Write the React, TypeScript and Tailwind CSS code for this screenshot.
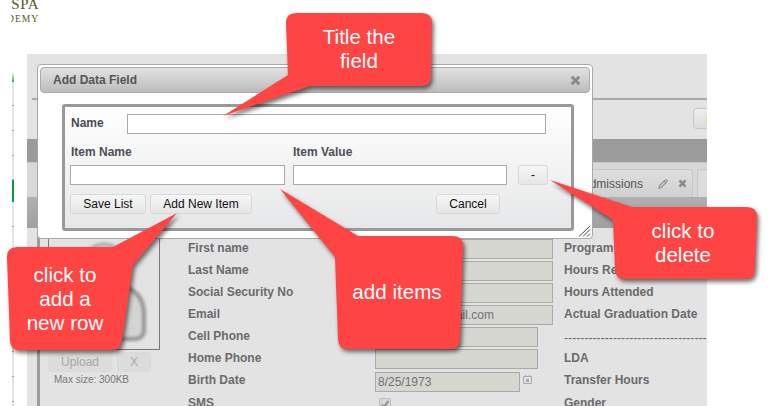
import { Pencil } from 'lucide-react';

const dashes = '-----------------------------------';

const rows = [
    { label: 'First name', value: '', width: 'w-[178px]', right: 'Program' },
    { label: 'Last Name', value: '', width: 'w-[178px]', right: 'Hours Required' },
    { label: 'Social Security No', value: '', width: 'w-[178px]', right: 'Hours Attended' },
    { label: 'Email', value: 'jane.doe@gmail.com', width: 'w-[178px]', right: 'Actual Graduation Date' },
    { label: 'Cell Phone', value: '', width: 'w-[163px]', right: dashes },
    { label: 'Home Phone', value: '', width: 'w-[163px]', right: 'LDA' },
];

// gaps between the little ticks on the cut-off strip at the far left
const stripCells = [24, 25, 25, 24];
const stripCellsLower = [25, 25, 25, 25, 25, 25, 25, 25];

const CloseIcon = ({ className }: { className: string }) => (
    <svg viewBox="0 0 10 10" className={className}>
        <path d="M1.6 1.6 L8.4 8.4 M8.4 1.6 L1.6 8.4" stroke="currentColor" strokeWidth="2.8" fill="none" />
    </svg>
);

const Button = ({ label, className }: { label: string; className: string }) => (
    <button className={`h-5 rounded-[3px] border border-[#d8d8d8] bg-gradient-to-b from-[#f6f6f6] to-[#e6e6e6] text-[12px] leading-none text-[#111] ${className}`}>
        {label}
    </button>
);

const TextBox = ({ className }: { className: string }) => (
    <div className={`h-5 border border-[#a9a9a9] bg-white ${className}`} />
);

const Dialog = () => (
    <div className="absolute left-[37px] top-[64px] flex h-[175px] w-[556px] flex-col rounded-[4px] border border-[#a8a8a8] bg-white p-[2px]">
        <div className="flex h-[26px] shrink-0 items-center justify-between rounded-[4px] border border-[#aaaaaa] bg-gradient-to-b from-[#e2e2e2] to-[#bcbcbc] pl-[12px] pr-[8px]">
            <span className="text-[12px] font-bold text-[#555]">Add Data Field</span>
            <CloseIcon className="h-[11px] w-[11px] text-[#8a8a8a]" />
        </div>
        <div className="ml-[22px] mt-[11px] flex h-[127px] w-[512px] flex-col rounded-[3px] border-[3px] border-[#999999] bg-gradient-to-b from-white to-[#e6e7e8] pl-[5px] pt-[7px]">
            <div className="flex h-5 items-center">
                <span className="w-[57px] pb-[2px] pl-[1px] text-[12px] font-bold text-[#4a4a55]">Name</span>
                <TextBox className="w-[419px]" />
            </div>
            <div className="mt-[7px] flex h-[22px] items-center text-[12px] font-bold text-[#4f4f58]">
                <span className="w-[223px] pl-[1px]">Item Name</span>
                <span>Item Value</span>
            </div>
            <div className="mt-[2px] flex items-center">
                <TextBox className="w-[215px]" />
                <TextBox className="ml-[8px] w-[214px]" />
                <Button label="-" className="ml-[11px] w-[30px]" />
            </div>
            <div className="mt-[9px] flex">
                <Button label="Save List" className="w-[76px]" />
                <Button label="Add New Item" className="ml-[4px] w-[102px]" />
                <Button label="Cancel" className="ml-[184px] w-[64px]" />
            </div>
        </div>
        <svg viewBox="0 0 13 12" className="absolute bottom-[1px] right-[1px] h-3 w-[13px] text-[#444]">
            <path d="M1 11.5 L12 1 M5 11.5 L12 4.5 M9 11.5 L12 8.5" stroke="currentColor" strokeWidth="1" fill="none" />
        </svg>
    </div>
);

const Callouts = () => (
    <>
        <svg viewBox="0 0 769 406" className="absolute inset-0 h-[406px] w-[769px] drop-shadow-[2px_3px_2px_rgba(0,0,0,0.55)]">
            <g fill="#ff4444">
                <path d="M296 13 H422 Q432 13 432 23 L431 76 Q431 86 421 86 H310 L223 116 L288 75 L286 23 Q286 13 296 13 Z" />
                <path d="M358 236 H453 Q463 236 463 246 L460 339 Q460 349 450 349 H348 Q338 349 338 339 L335 257 L280 189 Z" />
                <path d="M632 207 H747 Q757 207 757 217 L755 269 Q755 279 745 279 H625 Q615 279 615 269 L613 220 L550 180 Z" />
                <path d="M17 247 H113 L177 213 L133 265 L122 340 Q121 350 112 350 H20 Q10 350 10 340 L7 257 Q7 247 17 247 Z" />
            </g>
        </svg>
        <div className="absolute left-[286px] top-[25px] w-[146px] text-center text-[20.6px] leading-6 text-white">Title the<br />field</div>
        <div className="absolute left-[10px] top-[263px] w-[110px] text-center text-[20.6px] leading-6 text-white">click to<br />add a<br />new row</div>
        <div className="absolute left-[336px] top-[280px] w-[122px] text-center text-[20.6px] leading-6 text-white">add items</div>
        <div className="absolute left-[613px] top-[219px] w-[140px] text-center text-[20.6px] leading-6 text-white">click to<br />delete</div>
    </>
);

const Photo = () => (
    <div className="w-[112px] shrink-0">
        <div className="h-[112px] overflow-hidden border border-[#77777f]">
            <svg viewBox="0 0 110 110" className="h-full w-full text-[#949494] blur-[1.5px]">
                <circle cx="55" cy="26" r="21" fill="#d0d0d0" stroke="currentColor" strokeWidth="2" />
                <path d="M15 90 V75 Q15 45 55 45 Q95 45 95 75 V90 Q95 100 85 100 H25 Q15 100 15 90 Z" fill="#d4d4d4" stroke="currentColor" strokeWidth="4" />
            </svg>
        </div>
        <div className="mt-[2px] flex gap-[5px]">
            <button className="h-5 w-16 rounded-[3px] border border-[#dadada] bg-[#dcdcdc] text-[12px] text-[#a8a8a8]">Upload</button>
            <button className="h-5 w-[34px] rounded-[3px] border border-[#dadada] bg-[#dcdcdc] text-[12px] text-[#a8a8a8]">X</button>
        </div>
        <div className="ml-[6px] text-[10px] leading-4 text-[#777]">Max size: 300KB</div>
    </div>
);

const Form = () => (
    <div className="ml-[28px] min-w-0 flex-1 text-[12px] font-bold text-[#6a6a6c]">
        {rows.map(row => (
            <div key={row.label} className="flex h-[22px] items-center">
                <span className="w-[187px] shrink-0 pb-[2px]">{row.label}</span>
                <div className="w-[178px] shrink-0">
                    <div className={`h-5 overflow-hidden whitespace-nowrap border border-[#a9a9a9] bg-[#d6d7d1] pl-[5px] text-[12px] font-normal leading-[18px] text-[#6f7278] ${row.width}`}>
                        {row.value}
                    </div>
                </div>
                {row.right === dashes ? (
                    <span className="ml-[11px] min-w-0 flex-1 whitespace-nowrap pt-[1px] font-normal tracking-[0.08px]">{row.right}</span>
                ) : (
                    <span className="ml-[11px] min-w-0 flex-1 whitespace-nowrap pb-[2px]">{row.right}</span>
                )}
            </div>
        ))}
        <div className="flex h-[23px] items-center">
            <span className="w-[187px] shrink-0 pb-[4px]">Birth Date</span>
            <div className="flex w-[178px] shrink-0 items-center">
                <div className="mt-[1px] h-5 w-[145px] border border-[#a9a9a9] bg-[#d6d7d1] pl-[2px] text-[12px] font-normal leading-[18px] text-[#6f7278]">8/25/1973</div>
                <svg viewBox="0 0 9 9" className="ml-[3px] h-[9px] w-[9px] -translate-y-[2px] text-[#a8a8a8]">
                    <path d="M.5 1.5h8v7h-8z M2.5 0v2 M6.5 0v2" stroke="currentColor" fill="none" />
                    <path d="M3 4h3v3H3z" fill="currentColor" />
                </svg>
            </div>
            <span className="ml-[11px] pb-[4px]">Transfer Hours</span>
        </div>
        <div className="flex h-[22px] items-center">
            <span className="w-[187px] shrink-0 pb-[2px]">SMS</span>
            <div className="w-[178px] shrink-0 pl-[4px]">
                <div className="flex h-3 w-3 items-center justify-center rounded-[2px] border border-[#bdbdbd] bg-[#d8d8d8]">
                    <svg viewBox="0 0 10 10" className="h-[10px] w-[10px] text-[#8d8d8d]">
                        <path d="M1.5 5.5 L4 8 L8.5 2" stroke="currentColor" strokeWidth="2" fill="none" />
                    </svg>
                </div>
            </div>
            <span className="ml-[11px] pb-[2px]">Gender</span>
        </div>
    </div>
);

const LeftStrip = () => (
    <div className="ml-[12px] flex h-full w-[15px] flex-col">
        <div className="mt-[18px] h-[10px] w-[2px] shrink-0 bg-gradient-to-b from-white to-[#2aa84a]" />
        {stripCells.map((h, i) => (
            <div key={i} className="w-[2px] shrink-0 border-b border-[#a0a0a0] bg-[#e6e6e6]" style={{ height: h }} />
        ))}
        <div className="h-[22px] w-[2px] shrink-0 bg-[#0a9a3c]" />
        {stripCellsLower.map((h, i) => (
            <div key={i} className="w-[2px] shrink-0 border-b border-[#a0a0a0] bg-[#e6e6e6]" style={{ height: h }} />
        ))}
        <div className="w-[2px] flex-1 bg-[#e6e6e6]" />
    </div>
);

export default function App() {
    return (
        <div className="relative h-[406px] w-[769px] overflow-hidden bg-white font-['Liberation_Sans',Arial,sans-serif]">
            <div className="ml-[11px] h-[54px] w-[28px] overflow-hidden font-['Liberation_Serif',serif] text-[#4f5b20]">
                <div className="-mt-[3px] flex justify-end text-[15px] leading-[15px] tracking-[0.5px]">SPA</div>
                <div className="mt-[2px] flex justify-end whitespace-nowrap text-[9.5px] leading-[10px] tracking-[1px]">ACADEMY</div>
            </div>
            <div className="flex h-[352px]">
                <LeftStrip />
                <div className="flex h-full w-[680px] flex-col bg-[#e3e3e3]">
                    <div className="ml-[5px] h-[46px] shrink-0 border-b-2 border-[#a9a9a9]" />
                    <div className="flex h-[39px] shrink-0 items-start justify-end pt-[8px]">
                        <div className="flex h-[21px] w-[14px] items-center justify-end rounded-l-[4px] border border-r-0 border-[#c8c8c8] bg-gradient-to-b from-[#eeeeee] to-[#dcdcdc]">
                            <div className="h-[10px] w-[1px] bg-[#e8dc90]" />
                        </div>
                    </div>
                    <div className="h-[23px] shrink-0 bg-[#9b9b9b]" />
                    <div className="flex h-[35px] shrink-0 items-end justify-end gap-[4px] border-t border-[#c8c8c8] bg-[#d8d8d8]">
                        <div className="flex h-[28px] w-[120px] items-center justify-end rounded-t-[3px] border border-b-0 border-[#c6c6c6] bg-gradient-to-b from-[#dedede] to-[#d0d0d0] pr-[5px] text-[12px] text-[#555]">
                            <span>Admissions</span>
                            <Pencil className="ml-[15px] h-[10px] w-[10px] text-[#8b8b8b]" strokeWidth={2.5} />
                            <CloseIcon className="ml-[10px] h-[9px] w-[9px] text-[#8b8b8b]" />
                        </div>
                        <div className="h-[28px] w-[10px] rounded-tl-[3px] border border-b-0 border-r-0 border-[#c6c6c6] bg-[#dcdcdc]" />
                    </div>
                    <div className="h-[31px] shrink-0 bg-gradient-to-b from-[#b0b0b0] to-[#a0a0a0]" />
                    <div className="ml-[10px] flex flex-1 border-l-[3px] border-[#9c9c9c] pl-[8px] pt-[10px]">
                        <Photo />
                        <Form />
                    </div>
                </div>
            </div>
            <Dialog />
            <Callouts />
        </div>
    );
}
